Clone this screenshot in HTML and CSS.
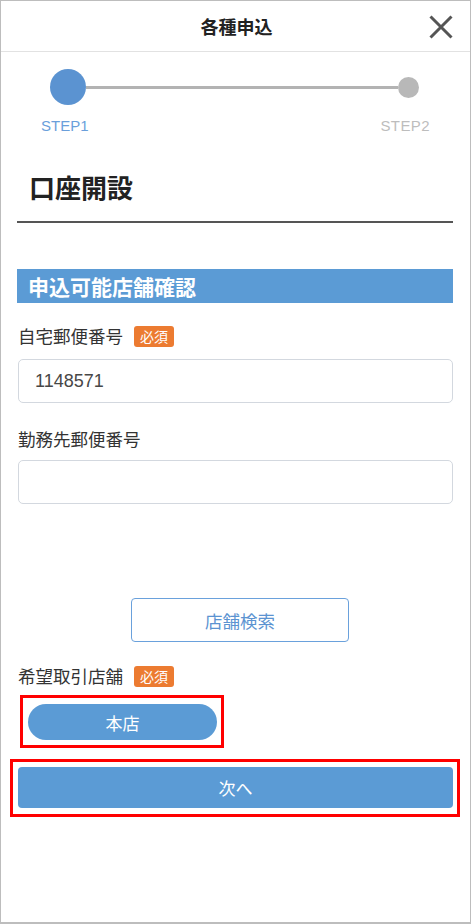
FILE: index.html
```html
<!DOCTYPE html>
<html lang="ja">
<head>
<meta charset="utf-8">
<title>各種申込</title>
<link rel="stylesheet" href="styles.css">
</head>
<body>
<div class="frame">
  <header class="topbar">
    <span></span>
    <h1 class="topbar-title">各種申込</h1>
    <button class="close" aria-label="閉じる">
      <svg width="24" height="24" viewBox="0 0 24 24"><path d="M1.5 1.5 L22.5 22.5 M22.5 1.5 L1.5 22.5" stroke="#555" stroke-width="3" fill="none"/></svg>
    </button>
  </header>

  <div class="stepper">
    <span class="dot dot-active"></span>
    <span class="track"></span>
    <span class="dot dot-idle"></span>
  </div>
  <div class="step-labels">
    <span class="step-label active">STEP1</span>
    <span class="step-label">STEP2</span>
  </div>

  <main class="content">
    <h2 class="page-title">口座開設</h2>

    <h3 class="section-head">申込可能店舗確認</h3>

    <div class="field">
      <div class="label">自宅郵便番号<span class="badge">必須</span></div>
      <div class="input">1148571</div>
    </div>

    <div class="field">
      <div class="label">勤務先郵便番号</div>
      <div class="input"></div>
    </div>

    <button class="search-btn">店舗検索</button>

    <div class="label label-store">希望取引店舗<span class="badge">必須</span></div>
    <div class="mark mark-store">
      <button class="pill">本店</button>
    </div>
    <div class="mark mark-next">
      <button class="next">次へ</button>
    </div>
  </main>
</div>
</body>
</html>
```

FILE: styles.css
```css
* { box-sizing: border-box; }
html, body { margin: 0; padding: 0; background: #fff; }
body {
  font-family: "Liberation Sans", "Noto Sans CJK JP", sans-serif;
  color: #333;
}
button { font-family: inherit; }

.frame {
  width: 471px;
  height: 924px;
  border: 1px solid #bdbdbd;
  border-bottom-width: 2px;
  overflow: hidden;
}

.topbar {
  height: 51px;
  border-bottom: 1px solid #e2e2e2;
  display: grid;
  grid-template-columns: 1fr auto 1fr;
  align-items: center;
}
.topbar-title {
  margin: 0;
  font-size: 18px;
  font-weight: bold;
  color: #222;
  font-family: "Noto Sans CJK JP", sans-serif;
  padding-left: 2px;
}
.close {
  justify-self: end;
  background: none;
  border: 0;
  padding: 0;
  margin-right: 17px;
  margin-top: 1px;
  width: 24px;
  height: 24px;
  display: flex;
}

.stepper {
  display: flex;
  align-items: center;
  margin: 17px 0 0 49px;
  width: 369px;
  height: 36px;
}
.dot { border-radius: 50%; flex: none; }
.dot-active { width: 36px; height: 36px; background: #5b93d1; }
.dot-idle { width: 21px; height: 21px; background: #b8b8b8; }
.track { flex: 1; height: 3px; background: #b3b3b3; }

.step-labels {
  display: flex;
  justify-content: space-between;
  padding: 0 40px 0 40px;
  margin-top: 12px;
}
.step-label {
  font-size: 15px;
  line-height: 18px;
  color: #bdbdbd;
  font-family: "Liberation Sans", sans-serif;
}
.step-label.active { color: #6a9fdb; }
.step-label + .step-label { letter-spacing: 0.4px; }

.content {
  padding: 0 17px 0 16px;
}

.page-title {
  margin: 34px 0 0 0;
  padding: 0 0 16px 12px;
  font-size: 26px;
  line-height: 36px;
  font-weight: bold;
  color: #222;
  font-family: "Noto Sans CJK JP", sans-serif;
  border-bottom: 2px solid #555;
}

.section-head {
  margin: 46px 0 0 0;
  height: 34px;
  background: #5b9bd5;
  color: #fff;
  font-size: 21px;
  font-weight: bold;
  line-height: 34px;
  padding-left: 11px;
  font-family: "Noto Sans CJK JP", sans-serif;
}

.field { margin-top: 20px; }
.field + .field { margin-top: 23px; }

.label {
  display: flex;
  align-items: center;
  height: 24px;
  padding-left: 1px;
  font-size: 17.5px;
  color: #333;
  font-family: "Noto Sans CJK JP", sans-serif;
}
.badge {
  display: inline-block;
  margin-left: 11px;
  width: 40px;
  height: 21px;
  line-height: 21px;
  background: #ec7b31;
  color: #fff;
  font-size: 14px;
  text-align: center;
  border-radius: 3px;
  position: relative;
  top: 1px;
}

.input {
  margin-top: 12px;
  margin-left: 1px;
  height: 44px;
  border: 1px solid #d3d8df;
  border-radius: 5px;
  padding-left: 16px;
  font-size: 18px;
  line-height: 42px;
  color: #474747;
  font-family: "Liberation Sans", sans-serif;
}
.field + .field .input { margin-top: 10px; }

.search-btn {
  display: block;
  margin: 94px 0 0 114px;
  width: 218px;
  height: 44px;
  background: #fff;
  border: 1px solid #6aa1dc;
  border-radius: 4px;
  color: #5b93d1;
  font-size: 17.5px;
  font-family: "Noto Sans CJK JP", sans-serif;
}

.label-store { margin-top: 21px; }

.mark {
  border: 3px solid #f00;
}
.mark-store {
  margin: 8px 0 0 3px;
  width: 204px;
  padding: 6px 4px 5px 5px;
}
.pill {
  display: block;
  width: 189px;
  height: 36px;
  border: 0;
  border-radius: 18px;
  background: #5b9bd5;
  color: #fff;
  font-size: 17px;
  font-family: "Noto Sans CJK JP", sans-serif;
}

.mark-next {
  margin: 11px -7px 0 -7px;
  padding: 5px 4px 6px 5px;
}
.next {
  display: block;
  width: 100%;
  height: 41px;
  border: 0;
  border-radius: 4px;
  background: #5b9bd5;
  color: #fff;
  font-size: 17px;
  font-family: "Noto Sans CJK JP", sans-serif;
}
```
